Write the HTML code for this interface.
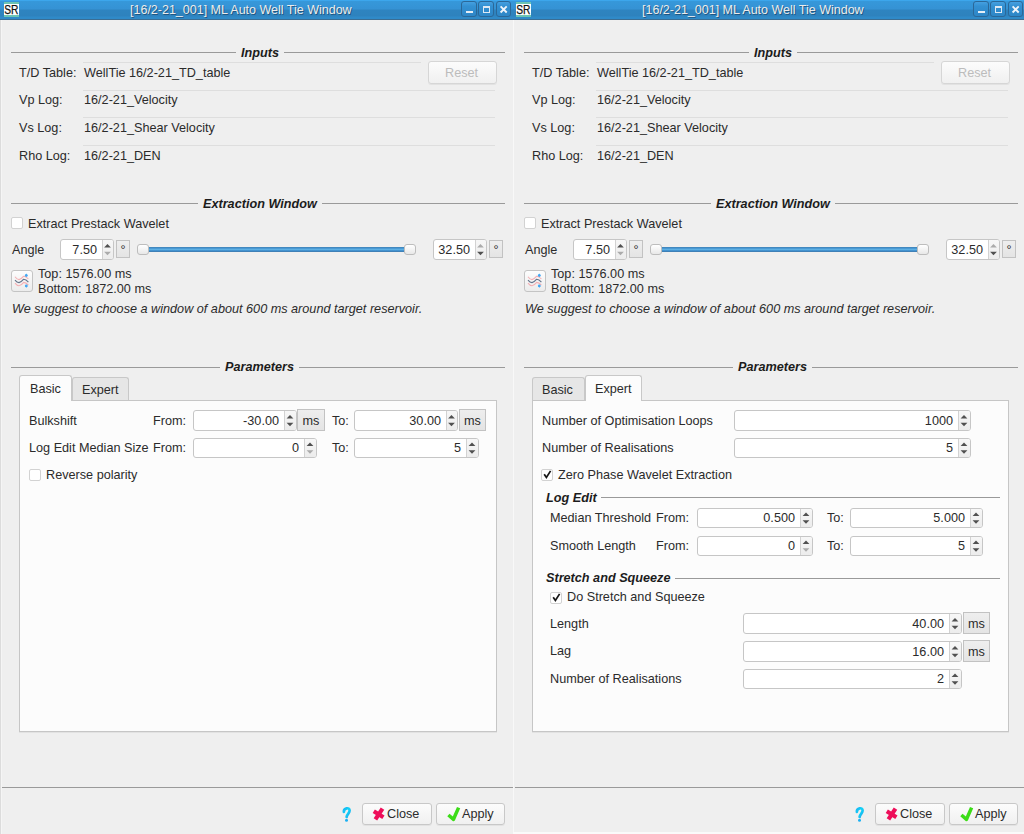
<!DOCTYPE html><html><head><meta charset="utf-8"><style>
*{margin:0;padding:0;box-sizing:border-box}
html,body{width:1024px;height:834px;overflow:hidden;background:#efefef;font-family:"Liberation Sans",sans-serif;font-size:12.67px;color:#2b2b2b}
body>div{position:absolute}
.t{position:absolute;line-height:15px;white-space:nowrap}
.gb{font-weight:bold;font-style:italic;color:#1c1c1c}
.tb{position:absolute;top:0;height:20px;background:linear-gradient(#3ca6ec 0px,#3ca6ec 1px,#3698da 1px,#3592d4 9px,#2e84c0 10px,#2e82bd 16px,#2f8ac8 17px,#2f8ac8 19px);border-bottom:1px solid #3b6d92}
.sr{position:absolute;width:15px;height:15px}
.tt{position:absolute;font-size:12.5px;line-height:15px;color:#ececec;white-space:nowrap;text-shadow:1px 1px 0 rgba(20,50,80,0.55)}
.wb{position:absolute;width:16px;height:16px;border:1.5px solid #2b6898;border-radius:3px;background:linear-gradient(#45a0e0,#3390d2 30%,#2e86c6)}
.gl{position:absolute;height:1px;background:#9a9a9a}
.gl2{position:absolute;height:1px;background:#9a9a9a}
.gt{position:absolute;background:#efefef;font-weight:bold;font-style:italic;line-height:15px;color:#1c1c1c;white-space:nowrap}
.sep{position:absolute;height:1px;background:#dedede}
.pb{position:absolute;border:1px solid #c8c8c8;border-radius:3px;background:linear-gradient(#fcfcfc,#f0f0f0);box-shadow:0 1px 0 rgba(0,0,0,0.05)}
.pb span{position:absolute;top:3px;line-height:15px;white-space:nowrap}
.pb.dis{border-color:#d6d6d6}
.pb.dis span{color:#bcbcbc;left:16px;top:4px}
.sp{position:absolute;border:1px solid #c6c6c6;border-radius:3px;background:#fff;overflow:hidden}
.spv{position:absolute;line-height:15px;white-space:nowrap}
.spa{position:absolute;top:0;border-left:1px solid #d4d4d4;background:linear-gradient(#f8f8f8,#ececec)}
.tu,.td{position:absolute;width:0;height:0;border-left:3.5px solid transparent;border-right:3.5px solid transparent}
.tu{border-bottom:4px solid #4a4a4a}
.td{border-top:4px solid #4a4a4a}
.fb{position:absolute;border:1px solid #c2c2c2;background:linear-gradient(#eeeeee,#e4e4e4);text-align:center}
.fb span{position:absolute;left:0;right:0;top:50%;margin-top:-8px;line-height:15px;display:block}
.cb{position:absolute;width:12px;height:12px;border:1px solid #d2d2d2;border-radius:2px;background:#fff}
.sg{position:absolute;height:5px;background:linear-gradient(#3e80b4,#4a9ad6 30%,#5eb0e2 50%,#3d8ccc 75%,#4078a8);border-radius:1px}
.sh{position:absolute;width:12px;height:11px;border:1px solid #bdbdbd;border-radius:3px;background:linear-gradient(#ffffff,#e8e8e8)}
.ib{position:absolute;width:22px;height:22px;border:1px solid #c4c4c4;border-radius:3px;background:linear-gradient(#fdfdfd,#ececec)}
.pane{position:absolute;border:1px solid #c6c6c6;background:#fcfcfc;box-shadow:0 1px 0 rgba(0,0,0,0.05)}
.tab{position:absolute;border:1px solid #c8c8c8;border-bottom:none;border-radius:3px 3px 0 0;background:#e6e6e6}
.tab.sel{background:#fcfcfc}
.help{position:absolute;font-size:15px;font-weight:bold;line-height:17px;color:#28b4f0;font-style:italic}
</style></head><body>
<svg width="0" height="0" style="position:absolute"><defs><linearGradient id="ag" x1="0" y1="0" x2="0" y2="1"><stop offset="0" stop-color="#f7f7f7"/><stop offset="1" stop-color="#ececec"/></linearGradient></defs></svg>
<div class="tb" style="left:0px;width:512px"></div>
<div class="sr" style="left:4px;top:2px"><svg width="15" height="15" style="position:absolute;left:0;top:0"><rect x="0" y="0" width="15" height="15" fill="#fff"/><rect x="0" y="0" width="15" height="2" fill="#6cc4b4"/><rect x="0" y="13" width="15" height="2" fill="#6cc4b4"/><text x="0.3" y="12.2" font-family="Liberation Sans" font-size="13" textLength="14.2" lengthAdjust="spacingAndGlyphs" fill="#111" stroke="#111" stroke-width="0.25">SR</text></svg></div>
<div class="tt" style="left:130px;top:3px">[16/2-21_001] ML Auto Well Tie Window</div>
<div class="wb" style="left:461px;top:1px;"><div style="position:absolute;left:3.5px;top:9px;width:7px;height:2px;background:#e6eef6"></div></div>
<div class="wb" style="left:478px;top:1px;"><div style="position:absolute;left:3.5px;top:4px;width:7.5px;height:7px;border:1.3px solid #dde9f4;border-top-width:2px"></div></div>
<div class="wb" style="left:496px;top:1px;width:15px"><svg width="13" height="13" style="position:absolute;left:0;top:0"><path d="M3.6 4.4 L9.7 10.5 M9.7 4.4 L3.6 10.5" stroke="#eef4fa" stroke-width="1.9"/></svg></div>
<div style="position:absolute;left:0px;top:20px;width:1px;height:814px;background:#dcdcdc"></div>
<div style="position:absolute;left:1px;top:20px;width:1px;height:814px;background:#f5f5f5"></div>
<div class="gl" style="left:11px;top:52px;width:494px"></div>
<div class="gt" style="left:236px;top:46px;padding:0 5px">Inputs</div>
<div class="t" style="left:19px;top:66px;">T/D Table:</div>
<div class="t" style="left:84px;top:66px;">WellTie 16/2-21_TD_table</div>
<div class="t" style="left:19px;top:93px;">Vp Log:</div>
<div class="t" style="left:84px;top:93px;">16/2-21_Velocity</div>
<div class="t" style="left:19px;top:121px;">Vs Log:</div>
<div class="t" style="left:84px;top:121px;">16/2-21_Shear Velocity</div>
<div class="t" style="left:19px;top:149px;">Rho Log:</div>
<div class="t" style="left:84px;top:149px;">16/2-21_DEN</div>
<div class="sep" style="left:83px;top:62px;width:338px"></div>
<div class="sep" style="left:83px;top:90px;width:412px"></div>
<div class="sep" style="left:83px;top:117px;width:412px"></div>
<div class="sep" style="left:83px;top:145px;width:412px"></div>
<div class="pb dis" style="left:428px;top:61px;width:69px;height:23px;"><span>Reset</span></div>
<div class="gl" style="left:11px;top:203px;width:494px"></div>
<div class="gt" style="left:198px;top:197px;padding:0 5px">Extraction Window</div>
<div class="cb" style="left:11px;top:217px"></div>
<div class="t" style="left:28px;top:217px;">Extract Prestack Wavelet</div>
<div class="t" style="left:12px;top:243px;">Angle</div>
<div class="sp" style="left:60px;top:239px;width:54px;height:21px"><svg width="54" height="21" style="position:absolute;left:-1px;top:-1px"><rect x="42" y="1" width="11" height="19" fill="url(#ag)"/><rect x="42" y="1" width="1" height="19" fill="#d2d2d2"/><path d="M44.1 8.6 L50.9 8.6 L47.5 5.1 Z" fill="#505050"/><path d="M44.1 12.8 L50.9 12.8 L47.5 16.3 Z" fill="#ababab"/></svg><div class="spv" style="right:16px;top:3px">7.50</div></div>
<div class="fb" style="left:116px;top:240px;width:14px;height:18px"><span style="margin-top:-6px">&deg;</span></div>
<div class="sg" style="left:145px;top:247px;width:262px"></div>
<div class="sh" style="left:137px;top:244px"></div>
<div class="sh" style="left:404px;top:244px"></div>
<div class="sp" style="left:433px;top:239px;width:54px;height:21px"><svg width="54" height="21" style="position:absolute;left:-1px;top:-1px"><rect x="42" y="1" width="11" height="19" fill="url(#ag)"/><rect x="42" y="1" width="1" height="19" fill="#d2d2d2"/><path d="M44.1 8.6 L50.9 8.6 L47.5 5.1 Z" fill="#ababab"/><path d="M44.1 12.8 L50.9 12.8 L47.5 16.3 Z" fill="#505050"/></svg><div class="spv" style="right:16px;top:3px">32.50</div></div>
<div class="fb" style="left:489px;top:240px;width:14px;height:18px"><span style="margin-top:-6px">&deg;</span></div>
<div class="ib" style="left:11px;top:270px"><svg width="22" height="22" style="position:absolute;left:0;top:0"><path d="M3 5.8 Q5 8.6 7 8.6 Q9 8.4 11.7 5.2 Q14 5.2 16.4 8" fill="none" stroke="#f4b0b4" stroke-width="1.1"/><path d="M3 9.2 Q5 11.6 7 11.6 Q9 11.4 11.7 8.2 Q14 8.2 16.4 11.2" fill="none" stroke="#66758c" stroke-width="1.15"/><path d="M3 12.2 Q5 14.8 7 14.8 Q9 14.6 11.7 11.4 Q14 11.4 16.4 14.2" fill="none" stroke="#f4b0b4" stroke-width="1.1"/><circle cx="14.3" cy="4.6" r="1.4" fill="#44a8f4"/><path d="M12.9 4.5 L14.3 2.6 L15.7 4.5 Z" fill="#44a8f4"/><circle cx="14.3" cy="14.8" r="1.4" fill="#44a8f4"/><path d="M12.9 14.9 L14.3 16.8 L15.7 14.9 Z" fill="#44a8f4"/></svg></div>
<div class="t" style="left:38px;top:267px;">Top: 1576.00 ms</div>
<div class="t" style="left:38px;top:282px;">Bottom: 1872.00 ms</div>
<div class="t" style="left:12px;top:302px;font-style:italic">We suggest to choose a window of about 600 ms around target reservoir.</div>
<div class="gl" style="left:11px;top:367px;width:494px"></div>
<div class="gt" style="left:220px;top:360px;padding:0 5px">Parameters</div>
<div class="pane" style="left:19px;top:400px;width:478px;height:332px;"></div>
<div class="tab sel" style="left:19px;top:375px;width:53px;height:26px"></div>
<div class="tab" style="left:72px;top:377px;width:57px;height:23px"></div>
<div class="t" style="left:30px;top:382px;">Basic</div>
<div class="t" style="left:82px;top:383px;">Expert</div>
<div class="t" style="left:29px;top:414px;">Bulkshift</div>
<div class="t" style="left:153px;top:414px;">From:</div>
<div class="sp" style="left:193px;top:410px;width:104px;height:21px"><svg width="104" height="21" style="position:absolute;left:-1px;top:-1px"><rect x="91" y="1" width="12" height="19" fill="url(#ag)"/><rect x="91" y="1" width="1" height="19" fill="#d2d2d2"/><path d="M93.6 8.6 L100.4 8.6 L97.0 5.1 Z" fill="#505050"/><path d="M93.6 12.8 L100.4 12.8 L97.0 16.3 Z" fill="#505050"/></svg><div class="spv" style="right:17px;top:3px">-30.00</div></div>
<div class="fb" style="left:297px;top:409px;width:28px;height:22px"><span style="margin-top:-6px">ms</span></div>
<div class="t" style="left:332px;top:414px;">To:</div>
<div class="sp" style="left:354px;top:410px;width:104px;height:21px"><svg width="104" height="21" style="position:absolute;left:-1px;top:-1px"><rect x="92" y="1" width="11" height="19" fill="url(#ag)"/><rect x="92" y="1" width="1" height="19" fill="#d2d2d2"/><path d="M94.1 8.6 L100.9 8.6 L97.5 5.1 Z" fill="#505050"/><path d="M94.1 12.8 L100.9 12.8 L97.5 16.3 Z" fill="#505050"/></svg><div class="spv" style="right:16px;top:3px">30.00</div></div>
<div class="fb" style="left:459px;top:409px;width:27px;height:22px"><span style="margin-top:-6px">ms</span></div>
<div class="t" style="left:29px;top:441px;">Log Edit Median Size</div>
<div class="t" style="left:153px;top:441px;">From:</div>
<div class="sp" style="left:193px;top:438px;width:124px;height:20px"><svg width="124" height="20" style="position:absolute;left:-1px;top:-1px"><rect x="111" y="1" width="12" height="18" fill="url(#ag)"/><rect x="111" y="1" width="1" height="18" fill="#d2d2d2"/><path d="M113.6 8.1 L120.4 8.1 L117.0 4.6 Z" fill="#505050"/><path d="M113.6 12.3 L120.4 12.3 L117.0 15.8 Z" fill="#ababab"/></svg><div class="spv" style="right:17px;top:2px">0</div></div>
<div class="t" style="left:332px;top:441px;">To:</div>
<div class="sp" style="left:354px;top:438px;width:125px;height:20px"><svg width="125" height="20" style="position:absolute;left:-1px;top:-1px"><rect x="112" y="1" width="12" height="18" fill="url(#ag)"/><rect x="112" y="1" width="1" height="18" fill="#d2d2d2"/><path d="M114.6 8.1 L121.4 8.1 L118.0 4.6 Z" fill="#505050"/><path d="M114.6 12.3 L121.4 12.3 L118.0 15.8 Z" fill="#505050"/></svg><div class="spv" style="right:17px;top:2px">5</div></div>
<div class="cb" style="left:29px;top:469px"></div>
<div class="t" style="left:46px;top:468px;">Reverse polarity</div>
<div class="gl" style="left:2px;top:787px;width:511px"></div>
<svg style="position:absolute;left:338px;top:803px" width="18" height="22"><defs><linearGradient id="hq0" x1="0" y1="0" x2="1" y2="1"><stop offset="0" stop-color="#18b8f4"/><stop offset="0.5" stop-color="#12d4f6"/><stop offset="1" stop-color="#1aa8ee"/></linearGradient></defs><path d="M5.9 8.8 C5.6 5.2 11.6 3.6 11.6 7.6 C11.6 10.4 8.9 11.2 8.6 14.0" fill="none" stroke="url(#hq0)" stroke-width="2.7" stroke-linecap="round"/><circle cx="8.5" cy="17.2" r="1.5" fill="#1cb0f2"/></svg>
<div class="pb" style="left:362px;top:803px;width:70px;height:22px;"><svg width="20" height="20" style="position:absolute;left:7px;top:0px"><path d="M5.4 15.3 L12.5 4.6 M3.8 7.3 L13.4 13.3" stroke="#ee0e5a" stroke-width="4.2" stroke-linecap="butt"/></svg><span style="left:24px">Close</span></div>
<div class="pb" style="left:436px;top:803px;width:69px;height:22px;"><svg width="20" height="20" style="position:absolute;left:7px;top:0px"><path d="M4.4 11.0 L9.5 15.3 L14.6 3.6" fill="none" stroke="#3cdc18" stroke-width="3.5" stroke-linecap="butt" stroke-linejoin="round"/></svg><span style="left:25px">Apply</span></div>
<div class="tb" style="left:512px;width:512px"></div>
<div class="sr" style="left:516px;top:2px"><svg width="15" height="15" style="position:absolute;left:0;top:0"><rect x="0" y="0" width="15" height="15" fill="#fff"/><rect x="0" y="0" width="15" height="2" fill="#6cc4b4"/><rect x="0" y="13" width="15" height="2" fill="#6cc4b4"/><text x="0.3" y="12.2" font-family="Liberation Sans" font-size="13" textLength="14.2" lengthAdjust="spacingAndGlyphs" fill="#111" stroke="#111" stroke-width="0.25">SR</text></svg></div>
<div class="tt" style="left:642px;top:3px">[16/2-21_001] ML Auto Well Tie Window</div>
<div class="wb" style="left:973px;top:1px;"><div style="position:absolute;left:3.5px;top:9px;width:7px;height:2px;background:#e6eef6"></div></div>
<div class="wb" style="left:990px;top:1px;"><div style="position:absolute;left:3.5px;top:4px;width:7.5px;height:7px;border:1.3px solid #dde9f4;border-top-width:2px"></div></div>
<div class="wb" style="left:1008px;top:1px;width:15px"><svg width="13" height="13" style="position:absolute;left:0;top:0"><path d="M3.6 4.4 L9.7 10.5 M9.7 4.4 L3.6 10.5" stroke="#eef4fa" stroke-width="1.9"/></svg></div>
<div class="gl" style="left:524px;top:52px;width:494px"></div>
<div class="gt" style="left:749px;top:46px;padding:0 5px">Inputs</div>
<div class="t" style="left:532px;top:66px;">T/D Table:</div>
<div class="t" style="left:597px;top:66px;">WellTie 16/2-21_TD_table</div>
<div class="t" style="left:532px;top:93px;">Vp Log:</div>
<div class="t" style="left:597px;top:93px;">16/2-21_Velocity</div>
<div class="t" style="left:532px;top:121px;">Vs Log:</div>
<div class="t" style="left:597px;top:121px;">16/2-21_Shear Velocity</div>
<div class="t" style="left:532px;top:149px;">Rho Log:</div>
<div class="t" style="left:597px;top:149px;">16/2-21_DEN</div>
<div class="sep" style="left:596px;top:62px;width:338px"></div>
<div class="sep" style="left:596px;top:90px;width:412px"></div>
<div class="sep" style="left:596px;top:117px;width:412px"></div>
<div class="sep" style="left:596px;top:145px;width:412px"></div>
<div class="pb dis" style="left:941px;top:61px;width:69px;height:23px;"><span>Reset</span></div>
<div class="gl" style="left:524px;top:203px;width:494px"></div>
<div class="gt" style="left:711px;top:197px;padding:0 5px">Extraction Window</div>
<div class="cb" style="left:524px;top:217px"></div>
<div class="t" style="left:541px;top:217px;">Extract Prestack Wavelet</div>
<div class="t" style="left:525px;top:243px;">Angle</div>
<div class="sp" style="left:573px;top:239px;width:54px;height:21px"><svg width="54" height="21" style="position:absolute;left:-1px;top:-1px"><rect x="42" y="1" width="11" height="19" fill="url(#ag)"/><rect x="42" y="1" width="1" height="19" fill="#d2d2d2"/><path d="M44.1 8.6 L50.9 8.6 L47.5 5.1 Z" fill="#505050"/><path d="M44.1 12.8 L50.9 12.8 L47.5 16.3 Z" fill="#ababab"/></svg><div class="spv" style="right:16px;top:3px">7.50</div></div>
<div class="fb" style="left:629px;top:240px;width:14px;height:18px"><span style="margin-top:-6px">&deg;</span></div>
<div class="sg" style="left:658px;top:247px;width:262px"></div>
<div class="sh" style="left:650px;top:244px"></div>
<div class="sh" style="left:917px;top:244px"></div>
<div class="sp" style="left:946px;top:239px;width:54px;height:21px"><svg width="54" height="21" style="position:absolute;left:-1px;top:-1px"><rect x="42" y="1" width="11" height="19" fill="url(#ag)"/><rect x="42" y="1" width="1" height="19" fill="#d2d2d2"/><path d="M44.1 8.6 L50.9 8.6 L47.5 5.1 Z" fill="#ababab"/><path d="M44.1 12.8 L50.9 12.8 L47.5 16.3 Z" fill="#505050"/></svg><div class="spv" style="right:16px;top:3px">32.50</div></div>
<div class="fb" style="left:1002px;top:240px;width:14px;height:18px"><span style="margin-top:-6px">&deg;</span></div>
<div class="ib" style="left:524px;top:270px"><svg width="22" height="22" style="position:absolute;left:0;top:0"><path d="M3 5.8 Q5 8.6 7 8.6 Q9 8.4 11.7 5.2 Q14 5.2 16.4 8" fill="none" stroke="#f4b0b4" stroke-width="1.1"/><path d="M3 9.2 Q5 11.6 7 11.6 Q9 11.4 11.7 8.2 Q14 8.2 16.4 11.2" fill="none" stroke="#66758c" stroke-width="1.15"/><path d="M3 12.2 Q5 14.8 7 14.8 Q9 14.6 11.7 11.4 Q14 11.4 16.4 14.2" fill="none" stroke="#f4b0b4" stroke-width="1.1"/><circle cx="14.3" cy="4.6" r="1.4" fill="#44a8f4"/><path d="M12.9 4.5 L14.3 2.6 L15.7 4.5 Z" fill="#44a8f4"/><circle cx="14.3" cy="14.8" r="1.4" fill="#44a8f4"/><path d="M12.9 14.9 L14.3 16.8 L15.7 14.9 Z" fill="#44a8f4"/></svg></div>
<div class="t" style="left:551px;top:267px;">Top: 1576.00 ms</div>
<div class="t" style="left:551px;top:282px;">Bottom: 1872.00 ms</div>
<div class="t" style="left:525px;top:302px;font-style:italic">We suggest to choose a window of about 600 ms around target reservoir.</div>
<div class="gl" style="left:524px;top:367px;width:494px"></div>
<div class="gt" style="left:733px;top:360px;padding:0 5px">Parameters</div>
<div class="pane" style="left:532px;top:400px;width:477px;height:332px;"></div>
<div class="tab" style="left:532px;top:377px;width:53px;height:23px"></div>
<div class="tab sel" style="left:585px;top:375px;width:57px;height:26px"></div>
<div class="t" style="left:542px;top:383px;">Basic</div>
<div class="t" style="left:595px;top:382px;">Expert</div>
<div class="t" style="left:542px;top:414px;">Number of Optimisation Loops</div>
<div class="sp" style="left:734px;top:410px;width:237px;height:21px"><svg width="237" height="21" style="position:absolute;left:-1px;top:-1px"><rect x="224" y="1" width="12" height="19" fill="url(#ag)"/><rect x="224" y="1" width="1" height="19" fill="#d2d2d2"/><path d="M226.6 8.6 L233.4 8.6 L230.0 5.1 Z" fill="#505050"/><path d="M226.6 12.8 L233.4 12.8 L230.0 16.3 Z" fill="#505050"/></svg><div class="spv" style="right:17px;top:3px">1000</div></div>
<div class="t" style="left:542px;top:441px;">Number of Realisations</div>
<div class="sp" style="left:734px;top:438px;width:237px;height:20px"><svg width="237" height="20" style="position:absolute;left:-1px;top:-1px"><rect x="224" y="1" width="12" height="18" fill="url(#ag)"/><rect x="224" y="1" width="1" height="18" fill="#d2d2d2"/><path d="M226.6 8.1 L233.4 8.1 L230.0 4.6 Z" fill="#505050"/><path d="M226.6 12.3 L233.4 12.3 L230.0 15.8 Z" fill="#505050"/></svg><div class="spv" style="right:17px;top:2px">5</div></div>
<div class="cb" style="left:541px;top:469px"><svg width="13" height="13" style="position:absolute;left:-1px;top:-1px"><path d="M3.2 5.2 L5.4 8.4 L9.6 1.9" fill="none" stroke="#161616" stroke-width="1.75"/></svg></div>
<div class="t" style="left:558px;top:468px;">Zero Phase Wavelet Extraction</div>
<div class="gl2" style="left:601px;top:497px;width:399px"></div>
<div class="t gb" style="left:546px;top:491px;">Log Edit</div>
<div class="t" style="left:550px;top:511px;">Median Threshold</div>
<div class="t" style="left:656px;top:511px;">From:</div>
<div class="sp" style="left:697px;top:508px;width:116px;height:20px"><svg width="116" height="20" style="position:absolute;left:-1px;top:-1px"><rect x="103" y="1" width="12" height="18" fill="url(#ag)"/><rect x="103" y="1" width="1" height="18" fill="#d2d2d2"/><path d="M105.6 8.1 L112.4 8.1 L109.0 4.6 Z" fill="#505050"/><path d="M105.6 12.3 L112.4 12.3 L109.0 15.8 Z" fill="#505050"/></svg><div class="spv" style="right:17px;top:2px">0.500</div></div>
<div class="t" style="left:827px;top:511px;">To:</div>
<div class="sp" style="left:850px;top:508px;width:133px;height:20px"><svg width="133" height="20" style="position:absolute;left:-1px;top:-1px"><rect x="120" y="1" width="12" height="18" fill="url(#ag)"/><rect x="120" y="1" width="1" height="18" fill="#d2d2d2"/><path d="M122.6 8.1 L129.4 8.1 L126.0 4.6 Z" fill="#505050"/><path d="M122.6 12.3 L129.4 12.3 L126.0 15.8 Z" fill="#505050"/></svg><div class="spv" style="right:17px;top:2px">5.000</div></div>
<div class="t" style="left:550px;top:539px;">Smooth Length</div>
<div class="t" style="left:656px;top:539px;">From:</div>
<div class="sp" style="left:697px;top:536px;width:116px;height:20px"><svg width="116" height="20" style="position:absolute;left:-1px;top:-1px"><rect x="103" y="1" width="12" height="18" fill="url(#ag)"/><rect x="103" y="1" width="1" height="18" fill="#d2d2d2"/><path d="M105.6 8.1 L112.4 8.1 L109.0 4.6 Z" fill="#505050"/><path d="M105.6 12.3 L112.4 12.3 L109.0 15.8 Z" fill="#ababab"/></svg><div class="spv" style="right:17px;top:2px">0</div></div>
<div class="t" style="left:827px;top:539px;">To:</div>
<div class="sp" style="left:850px;top:536px;width:133px;height:20px"><svg width="133" height="20" style="position:absolute;left:-1px;top:-1px"><rect x="120" y="1" width="12" height="18" fill="url(#ag)"/><rect x="120" y="1" width="1" height="18" fill="#d2d2d2"/><path d="M122.6 8.1 L129.4 8.1 L126.0 4.6 Z" fill="#505050"/><path d="M122.6 12.3 L129.4 12.3 L126.0 15.8 Z" fill="#505050"/></svg><div class="spv" style="right:17px;top:2px">5</div></div>
<div class="gl2" style="left:675px;top:578px;width:325px"></div>
<div class="t gb" style="left:546px;top:571px;">Stretch and Squeeze</div>
<div class="cb" style="left:550px;top:592px"><svg width="13" height="13" style="position:absolute;left:-1px;top:-1px"><path d="M3.2 5.2 L5.4 8.4 L9.6 1.9" fill="none" stroke="#161616" stroke-width="1.75"/></svg></div>
<div class="t" style="left:567px;top:590px;">Do Stretch and Squeeze</div>
<div class="t" style="left:550px;top:617px;">Length</div>
<div class="sp" style="left:743px;top:613px;width:219px;height:21px"><svg width="219" height="21" style="position:absolute;left:-1px;top:-1px"><rect x="206" y="1" width="12" height="19" fill="url(#ag)"/><rect x="206" y="1" width="1" height="19" fill="#d2d2d2"/><path d="M208.6 8.6 L215.4 8.6 L212.0 5.1 Z" fill="#505050"/><path d="M208.6 12.8 L215.4 12.8 L212.0 16.3 Z" fill="#505050"/></svg><div class="spv" style="right:17px;top:3px">40.00</div></div>
<div class="fb" style="left:963px;top:612px;width:27px;height:22px"><span style="margin-top:-6px">ms</span></div>
<div class="t" style="left:550px;top:644px;">Lag</div>
<div class="sp" style="left:743px;top:641px;width:219px;height:21px"><svg width="219" height="21" style="position:absolute;left:-1px;top:-1px"><rect x="206" y="1" width="12" height="19" fill="url(#ag)"/><rect x="206" y="1" width="1" height="19" fill="#d2d2d2"/><path d="M208.6 8.6 L215.4 8.6 L212.0 5.1 Z" fill="#505050"/><path d="M208.6 12.8 L215.4 12.8 L212.0 16.3 Z" fill="#505050"/></svg><div class="spv" style="right:17px;top:3px">16.00</div></div>
<div class="fb" style="left:963px;top:640px;width:27px;height:22px"><span style="margin-top:-6px">ms</span></div>
<div class="t" style="left:550px;top:672px;">Number of Realisations</div>
<div class="sp" style="left:743px;top:669px;width:219px;height:20px"><svg width="219" height="20" style="position:absolute;left:-1px;top:-1px"><rect x="206" y="1" width="12" height="18" fill="url(#ag)"/><rect x="206" y="1" width="1" height="18" fill="#d2d2d2"/><path d="M208.6 8.1 L215.4 8.1 L212.0 4.6 Z" fill="#505050"/><path d="M208.6 12.3 L215.4 12.3 L212.0 15.8 Z" fill="#505050"/></svg><div class="spv" style="right:17px;top:2px">2</div></div>
<div class="gl" style="left:515px;top:787px;width:509px"></div>
<svg style="position:absolute;left:851px;top:803px" width="18" height="22"><defs><linearGradient id="hq512" x1="0" y1="0" x2="1" y2="1"><stop offset="0" stop-color="#18b8f4"/><stop offset="0.5" stop-color="#12d4f6"/><stop offset="1" stop-color="#1aa8ee"/></linearGradient></defs><path d="M5.9 8.8 C5.6 5.2 11.6 3.6 11.6 7.6 C11.6 10.4 8.9 11.2 8.6 14.0" fill="none" stroke="url(#hq512)" stroke-width="2.7" stroke-linecap="round"/><circle cx="8.5" cy="17.2" r="1.5" fill="#1cb0f2"/></svg>
<div class="pb" style="left:875px;top:803px;width:70px;height:22px;"><svg width="20" height="20" style="position:absolute;left:7px;top:0px"><path d="M5.4 15.3 L12.5 4.6 M3.8 7.3 L13.4 13.3" stroke="#ee0e5a" stroke-width="4.2" stroke-linecap="butt"/></svg><span style="left:24px">Close</span></div>
<div class="pb" style="left:949px;top:803px;width:69px;height:22px;"><svg width="20" height="20" style="position:absolute;left:7px;top:0px"><path d="M4.4 11.0 L9.5 15.3 L14.6 3.6" fill="none" stroke="#3cdc18" stroke-width="3.5" stroke-linecap="butt" stroke-linejoin="round"/></svg><span style="left:25px">Apply</span></div>
<div style="position:absolute;left:513px;top:20px;width:1px;height:812px;background:#f8f8f8"></div>
<div style="position:absolute;left:513px;top:832px;width:511px;height:2px;background:#fafafa"></div>
</body></html>
